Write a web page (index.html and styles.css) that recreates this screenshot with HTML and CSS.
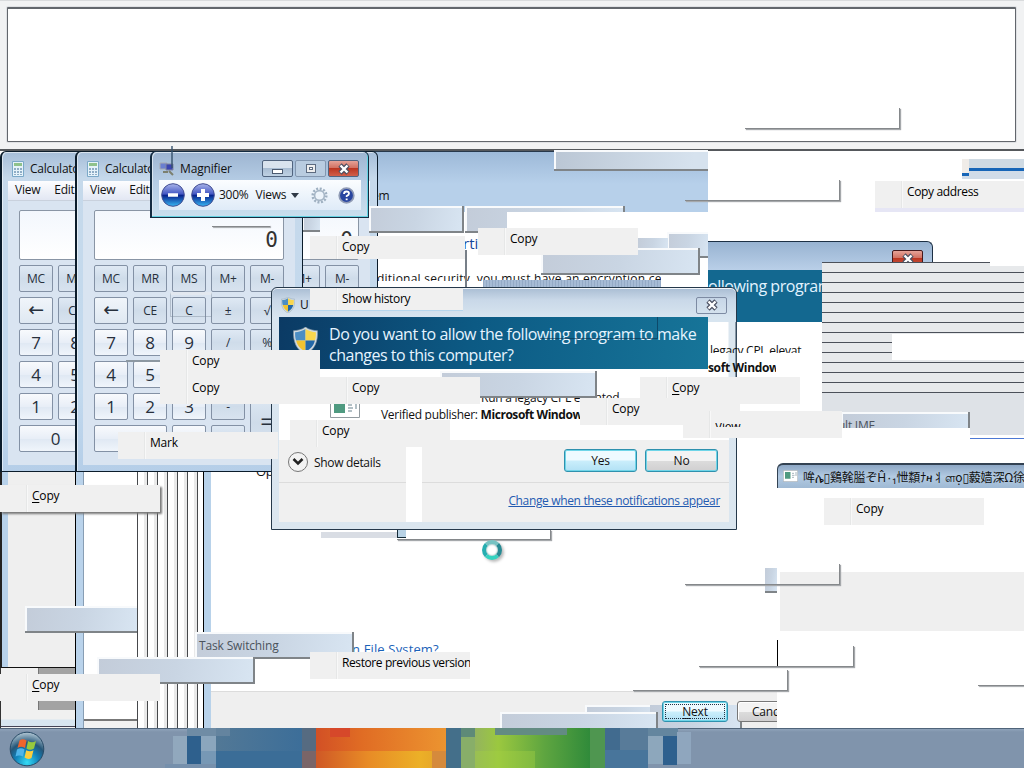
FILE: index.html
```html
<!DOCTYPE html>
<html lang="en">
<head>
<meta charset="utf-8">
<title>Desktop</title>
<link rel="stylesheet" href="styles.css">
</head>
<body>
<svg width="0" height="0" class="defs">
  <defs>
    <linearGradient id="ball" x1="0" y1="0" x2="0" y2="1"><stop offset="0" stop-color="#a9b5ea"/><stop offset=".45" stop-color="#4558c4"/><stop offset=".52" stop-color="#08248f"/><stop offset="1" stop-color="#38b8f4"/></linearGradient>
    <symbol id="shield" viewBox="0 0 24 26" preserveAspectRatio="none">
      <path d="M12 0C9 2.500 4 3.500 0.500 3.500C0 14 3 22 12 26C21 22 24 14 23.500 3.500C20 3.500 15 2.500 12 0Z" fill="#d2dbe1" stroke="#8296a5" stroke-width=".6"/>
      <path d="M12 2C9 4 5 5 2 5C2 8 2 10 3 13H12Z" fill="#4c8ec4"/><path d="M12 2C15 4 19 5 22 5C22 8 22 10 21 13H12Z" fill="#f8d64e"/>
      <path d="M3 13H12V24C7 21 4 18 3 13Z" fill="#f1c331"/><path d="M21 13H12V24C17 21 20 18 21 13Z" fill="#2368a8"/>
    </symbol>
    <symbol id="cross" viewBox="0 0 14 12"><path d="M3 2L11 10M11 2L3 10" stroke="#4b5062" stroke-width="4.600"/><path d="M3.500 2.500L10.500 9.500M10.500 2.500L3.500 9.500" stroke="#fff" stroke-width="2.400"/></symbol>
    <symbol id="prog" viewBox="0 0 30 18" preserveAspectRatio="none"><path d="M.5.5H29.500V17.500H.5Z" fill="#fff" stroke="#929ba0"/><path d="M4 3H15V13H4Z" fill="#4f9a80"/><path d="M18 5H22M18 8H23M18 11H22M26 3V9" stroke="#9aacb4" stroke-width="1.500"/></symbol>
    <symbol id="calcicon" viewBox="0 0 12 16"><path d="M.5.5H11.500V15.500H.5Z" fill="#e6f3fa" stroke="#7ba9c8"/><path d="M2 2H10V5H2Z" fill="#8fc28c"/><path d="M2 7H4V9H2ZM5 7H7V9H5ZM8 7H10V9H8ZM2 10H4V12H2ZM5 10H7V12H5ZM8 10H10V12H8ZM2 13H4V14H2ZM5 13H7V14H5ZM8 13H10V14H8Z" fill="#8fadc6"/></symbol>
  </defs>
</svg>
<main class="desktop">
  <section class="obj pane"><div class="pane-box"></div></section>
  <i class="obj drop d1"></i>

  <section class="obj sys">
    <p class="obj t sys-em">em</p>
    <div class="obj sys-clip"><span class="t">ditional security, you must have an encryption ce</span></div>
  </section>

  <section class="obj left-win"></section>
  <section class="obj left-low"><i></i></section>
  <section class="obj mid-win"></section>
  <div class="obj vlines"></div>
  <section class="obj wizard"><p class="t">Op</p><div class="foot"></div></section>
  <div class="obj wiz-link"><span class="t">n File System?</span></div>

  <section class="obj calc c3" data-calc></section>
  <i class="obj tip t-calc"></i>
  <section class="obj calc c1" data-calc></section>
  <section class="obj calc c2" data-calc></section>
  <i class="obj bevel bv1"></i><i class="obj bevel bv2"></i>

  <i class="obj tip t1"></i><i class="obj tip t2"></i><i class="obj tip t3"></i><i class="obj white w1"></i>
  <i class="obj tip t4"></i><i class="obj tip t5"></i><i class="obj tip t6"></i><i class="obj tip t7"></i><i class="obj line-a"></i>
  <p class="obj t rti">rti</p>

  <section class="obj uac2">
    <header><span class="close red"><svg width="14" height="12"><use href="#cross"/></svg></span></header>
    <h2>ollowing progran</h2>
  </section>
  <div class="obj hlines"></div><i class="obj white w2"></i><i class="obj white w4"></i>
  <i class="obj grey-r"></i><i class="obj blue-r"></i>
  <div class="obj tip ime"><span class="t">ult IME</span></div>

  <section class="obj uac">
    <header><svg width="14" height="16"><use href="#shield"/></svg><span class="t">U</span><span class="close"><svg width="14" height="12"><use href="#cross"/></svg></span></header>
    <div class="banner"><svg width="25" height="27"><use href="#shield"/></svg><h1>Do you want to allow the following program to make<br>changes to this computer?</h1></div>
    <div class="info"><svg width="30" height="18"><use href="#prog"/></svg><div><p class="t cpl">Run a legacy CPL elevated</p><p class="t pub">Verified publisher: <b>Microsoft Window</b></p></div></div>
    <div class="actions"><span class="chev"><svg width="12" height="8" viewBox="0 0 12 8"><path d="M1.500 1L6 5.500L10.500 1" fill="none" stroke="#222" stroke-width="2.500"/></svg></span><span class="t det">Show details</span><button class="yes">Yes</button><button>No</button></div>
    <div class="more"><a class="t">Change when these notifications appear</a></div>
  </section>
  <i class="obj bevel bv3"></i>
  <i class="obj white w3"></i><i class="obj w6"></i>
  <div class="obj leg"><span class="t">legacy CPL elevat</span></div>
  <div class="obj leg2 t"><b>soft Window</b></div>
  <i class="obj tip t8"></i>

  <div class="obj item m1"><span>Copy</span></div>
  <div class="obj item m2"><span>Copy</span></div>
  <div class="obj item m3"><span>Show history</span></div>
  <div class="obj item m4"><span>Copy</span></div>
  <div class="obj item m5"><span>Copy</span></div>
  <div class="obj item m6"><span>Copy</span></div>
  <div class="obj item m7"><span><u>C</u>opy</span></div>
  <div class="obj item m8"><span>Copy</span></div>
  <div class="obj item m9"><span>View</span></div>
  <div class="obj item m10"><span>Copy</span></div>
  <div class="obj item m11"><span>Mark</span></div>
  <div class="obj item m12"><span><u>C</u>opy</span></div>
  <i class="obj tip t9"></i>
  <div class="obj tip t10"><span class="t">Task Switching</span></div>
  <i class="obj tip t11"></i>
  <div class="obj item m13"><span><u>C</u>opy</span></div>
  <div class="obj item m14"><span>Restore previous version</span></div>

  <i class="obj ghost"></i><i class="obj edge"></i>
  <div class="obj item m15"><span>Copy address</span></div>
  <section class="obj cjk"><svg width="15" height="12"><use href="#prog"/></svg><span>哞ሌ▯鷄㲦膉ぞĤ۰₁怈纇ﾅዛ丬ளọ▯藙嫱深Ω徐</span></section>
  <div class="obj item m16"><span>Copy</span></div>
  <i class="obj tip t12"></i><i class="obj grey-b"></i><i class="obj caret"></i>

  <i class="obj tip t13"></i><i class="obj tip t14"></i><i class="obj tip t15"></i>
  <button class="obj next"><u>N</u>ext</button>
  <div class="obj cancel-clip"><button class="cancel">Cancel</button></div>
  <i class="obj drop d2"></i><i class="obj drop d3"></i><i class="obj drop d4"></i><i class="obj drop d5"></i><i class="obj drop d6"></i><i class="obj drop d7"></i>
  <i class="obj below"></i><i class="obj drop d8"></i><i class="obj chip"></i>
  <i class="obj ring"></i>

  <section class="obj mag">
    <header><svg width="16" height="16" viewBox="0 0 16 16"><path d="M1 2H8V8H1Z" fill="#6b7fd0" stroke="#a7a9b0"/><path d="M7 3H14V9H7Z" fill="#3b45b0" stroke="#8286a0"/><path d="M4 11H9M10 10L14 14" stroke="#7c806f" stroke-width="2"/></svg><span class="t">Magnifier</span>
      <span class="cap"><i class="mn"></i></span><span class="cap pale"><i class="mx"></i></span><span class="cap red"><svg width="14" height="12"><use href="#cross"/></svg></span></header>
    <div class="tools">
      <svg width="24" height="24" viewBox="0 0 24 24"><circle cx="12" cy="12" r="11.300" fill="url(#ball)" stroke="#444f92"/><path d="M7 12H17" stroke="#fff" stroke-width="3.500"/></svg>
      <svg class="plus" width="24" height="24" viewBox="0 0 24 24"><circle cx="12" cy="12" r="11.300" fill="url(#ball)" stroke="#444f92"/><path d="M6 12H18M12 6V18" stroke="#fff" stroke-width="4"/></svg>
      <span class="t pct">300%</span><span class="t views">Views</span><i class="arrow"></i>
      <svg class="gear" width="17" height="17" viewBox="0 0 17 17"><circle cx="8.500" cy="8.500" r="6.800" fill="none" stroke="#9fb0c1" stroke-width="2.500" stroke-dasharray="2 1.560"/><circle cx="8.500" cy="8.500" r="4.900" fill="#edf4fb" stroke="#a6b6c6" stroke-width="1.600"/></svg>
      <svg width="17" height="17" viewBox="0 0 17 17"><circle cx="8.500" cy="8.500" r="7.300" fill="#2845a0" stroke="#909bb5" stroke-width="1.700"/><path d="M6 7Q6 4.500 8.500 4.500Q11 4.500 11 6.500Q11 8 8.700 9V10" fill="none" stroke="#fff" stroke-width="1.800"/><path d="M7.700 11.500H9.600V13.200H7.700Z" fill="#fff"/></svg>
    </div>
  </section>
  <i class="obj vmark"></i>

  <footer class="obj taskbar">
    <svg class="mosaic" width="540" height="40" shape-rendering="crispEdges">
      <defs>
        <linearGradient id="b1"><stop offset="0" stop-color="#527896"/><stop offset="1" stop-color="#3c6e99"/></linearGradient>
        <linearGradient id="o1"><stop offset="0" stop-color="#d25025"/><stop offset=".35" stop-color="#e06c24"/><stop offset="1" stop-color="#ec9430"/></linearGradient>
        <linearGradient id="o2"><stop offset="0" stop-color="#cf5826"/><stop offset=".4" stop-color="#e88b26"/><stop offset=".8" stop-color="#ecb027"/><stop offset="1" stop-color="#e2a02a"/></linearGradient>
        <linearGradient id="g1"><stop offset="0" stop-color="#94b45e"/><stop offset=".2" stop-color="#9bc83f"/><stop offset=".6" stop-color="#5ea540"/><stop offset="1" stop-color="#2f8a3a"/></linearGradient>
      </defs>
      <rect x="8" y="8" width="15" height="28" fill="#91a8bd"/><rect x="22" y="0" width="30" height="8" fill="#6f8ca5"/><rect x="22" y="8" width="14" height="29" fill="#2e608d"/><rect x="36" y="8" width="15" height="15" fill="#8ba6bd"/><rect x="36" y="23" width="15" height="13" fill="#7798b5"/><rect x="0" y="36" width="51" height="4" fill="#7690ac"/>
      <rect x="51" y="0" width="87" height="23" fill="url(#b1)"/><rect x="51" y="23" width="87" height="17" fill="#3b6d97"/><rect x="51" y="0" width="14" height="8" fill="#64849f"/>
      <rect x="137" y="0" width="15" height="40" fill="#566b81"/><rect x="137" y="23" width="15" height="17" fill="#7a6568"/>
      <rect x="151" y="0" width="130" height="23" fill="url(#o1)"/><rect x="151" y="23" width="130" height="17" fill="url(#o2)"/><rect x="267" y="23" width="14" height="17" fill="#d58a3c"/><rect x="165" y="0" width="20" height="9" fill="#d6482a"/>
      <rect x="281" y="0" width="15" height="40" fill="#446f8a"/><rect x="296" y="0" width="14" height="40" fill="#88ae69"/><rect x="296" y="0" width="14" height="9" fill="#5e8a78"/>
      <rect x="310" y="0" width="116" height="40" fill="url(#g1)"/><rect x="330" y="0" width="72" height="7" fill="#638b83"/><rect x="310" y="23" width="60" height="17" fill="#a3d044" opacity=".4"/><rect x="425" y="0" width="15" height="40" fill="#4f9650"/>
      <rect x="440" y="0" width="43" height="40" fill="#587b99"/><rect x="440" y="0" width="15" height="40" fill="#416b8f"/><rect x="440" y="22" width="43" height="18" fill="#48759b"/>
      <rect x="483" y="8" width="15" height="28" fill="#8da7bc"/><rect x="483" y="0" width="30" height="8" fill="#64869f"/><rect x="498" y="8" width="14" height="29" fill="#2e608e"/><rect x="512" y="4" width="14" height="32" fill="#8fa6be"/>
    </svg>
    <svg class="orb" width="36" height="36" viewBox="0 0 36 36">
      <defs><radialGradient id="orb" cx=".5" cy=".9" r=".9"><stop offset="0" stop-color="#35dcf5"/><stop offset=".4" stop-color="#1180b8"/><stop offset=".65" stop-color="#255678"/><stop offset="1" stop-color="#b4c9d6"/></radialGradient></defs>
      <circle cx="18" cy="18" r="16.800" fill="url(#orb)" stroke="#274a66"/>
      <path d="M10.500 9.500Q13.500 7 17.500 9.500L16 17Q12 14.500 8.500 17Z" fill="#f0642c"/><path d="M19 10Q23 12.500 27 10L25 17.500Q21 20 17.500 17.500Z" fill="#97c93e"/>
      <path d="M8 18.500Q12 16 15.500 18.500L14 25.500Q10 23.500 6.500 25.500Z" fill="#4fb5ea"/><path d="M17.200 19.200Q21 21.500 24.500 19.200L22.500 27Q19 29 15.500 26.500Z" fill="#fbce3e"/>
    </svg>
  </footer>
</main>
<script src="calc.js"></script>
</body>
</html>
```
FILE: styles.css
```css
* { box-sizing: border-box; }
body { margin: 0; font: 12px/16px "Open Sans", "Noto Sans", "Noto Sans CJK JP", sans-serif; color: #111; overflow: hidden; }
p, h1, h2 { margin: 0; font-weight: 400; }
.defs { position: absolute; }
.desktop { position: relative; width: 1024px; height: 768px; background: #fff; overflow: hidden; }
.obj { position: absolute; display: block; }
.t { white-space: nowrap; letter-spacing: -.25px; }
svg { flex: none; display: block; }

.pane { left: 0; top: 0; width: 1024px; height: 151px; padding: 6px 8px 8px 7px; background: #f1f2f3; border-bottom: 2px solid #55585c; border-top: 1px solid #d9dbdd; }
.pane-box { height: 135px; background: #fff; border: 1px solid #62666c; border-top-width: 2px; border-radius: 1px; box-shadow: 0 0 0 1px #dfe1e4; }
.white { background: #fff; }

.sys { left: 368px; top: 151px; width: 340px; height: 137px; overflow: hidden; border-top: 1px solid #27384b; background: linear-gradient(#9db9d8, #b7d0ea 32px 60px, #fff 60px); }
.sys-em { left: 4px; top: 36px; }
.sys-clip { left: 9px; top: 122px; width: 284px; height: 7px; overflow: hidden; }
.sys-clip .t { display: block; margin-top: -3px; letter-spacing: .24px; }
.rti { left: 463px; top: 235px; font-size: 15px; letter-spacing: 0; color: #16479a; }

.left-win { left: 0; top: 472px; width: 76px; height: 196px; background: #efefef; border-left: 2px solid #222; border-right: 1px solid #000; border-bottom: 1px solid #111; box-shadow: inset 6px 0 #b7d1ea; }
.left-low { left: 0; top: 668px; width: 76px; height: 60px; padding: 0 0 0 37px; background: linear-gradient(#f0f0f0 51px, #d8e6f0 52px 58px, #445 58px 59px, #f3f3f3 59px); border-left: 1px solid #333; border-right: 1px solid #000; }
.left-low i { display: block; height: 42px; background: #a3a3a3; border-left: 1px solid #777; }
.mid-win { left: 76px; top: 472px; width: 61px; height: 256px; background: linear-gradient(#fff 247px, #777 247px 249px, #f1f1f1 249px); }
.mid-win::before { content: ""; display: block; width: 7px; height: 256px; background: #bad3eb; border-right: 1px solid #889eb4; }
.vlines { left: 137px; top: 472px; width: 67px; height: 256px; background: repeating-linear-gradient(90deg, #46484b 0 1px, #fff 1px 7px, #e9e9e9 7px 10px); border-right: 1px solid #000; }
.wizard { left: 204px; top: 472px; width: 573px; height: 256px; padding-left: 7px; background: linear-gradient(90deg, #b8d2ea 7px, #fff 7px); overflow: hidden; display: flex; flex-direction: column; justify-content: space-between; }
.wizard p { padding-left: 45px; margin-top: -9px; font-size: 13px; }
.foot { height: 37px; background: #efefef; border-top: 1px solid #dcdcdc; }
.wiz-link { left: 354px; top: 642px; width: 90px; height: 11px; overflow: hidden; color: #1b62b8; font-size: 13px; }
.wiz-link .t { display: block; margin-top: -1px; margin-left: -2px; letter-spacing: .15px; }

.calc { top: 151px; width: 228px; height: 321px; padding: 0 18px 0 17px; border: 1px solid #0b1c2b; border-left-width: 2px; background: linear-gradient(#a5bdd8, #c6d9eb 26px, #c2d9ee 240px, #b5cee8); border-radius: 6px 6px 0 0; box-shadow: inset 1px 1px rgba(255,255,255,.55); overflow: hidden; }
.c1 { left: 0; } .c2 { left: 75px; } .c3 { left: 150px; }
.calc header { display: flex; align-items: center; gap: 6px; height: 32px; margin-left: -7px; padding-top: 2px; }
.calc nav { display: flex; gap: 14px; height: 20px; margin: -3px -11px 0; padding: 1px 7px; background: linear-gradient(#fdfdff, #e2e7f3); border-bottom: 1px solid #c9d1dd; }
.calc .body { margin: 0 -11px; padding: 9px 11px 12px; background: #d9e4f1; height: 264px; }
.display { width: 190px; height: 50px; margin-bottom: 5px; border: 1px solid #8995a5; border-radius: 2px; background: linear-gradient(#f3f7fd, #fff); text-align: right; padding: 17px 5px 0; font: 21px/24px "DejaVu Sans Mono", monospace; color: #333; }
.keys { display: grid; grid-template-columns: repeat(5, 34px); grid-auto-rows: 27px; gap: 5px; }
.keys span { border: 1px solid #8391a5; border-radius: 2px; background: linear-gradient(#f8fafd, #e8eef7 50%, #dfe8f3 51%, #f0f5fb); text-align: center; line-height: 25px; color: #27303c; font-size: 12px; letter-spacing: -.3px; }
.keys .op { background: linear-gradient(#dfe9f4, #cfdcea 50%, #d8e3ef); }
.keys .num { font-size: 17px; }
.keys .bk { font: 19px/22px "DejaVu Sans", sans-serif; background: linear-gradient(#f0f5fa, #dfe8f2); }
.keys .eq { grid-row: span 2; font-size: 24px; line-height: 54px; }
.keys .zero { grid-column: span 2; }

.bevel { border: 0 solid #8e98a3; }
.bv1 { left: 170px; top: 292px; width: 42px; height: 25px; border: 1px solid rgba(120,135,150,.4); border-top: 3px solid rgba(230,235,240,.7); }
.bv2 { left: 126px; top: 360px; width: 40px; height: 2px; background: #8d98a2; }
.bv3 { left: 540px; top: 317px; width: 118px; height: 22px; border: solid rgba(8,48,78,.6); border-width: 0 1px 1px 0; }

.tip { background: linear-gradient(100deg, #c3ccd9, #c9d5e3 50%, #d8e5f2); border: solid #7f8488; border-width: 0 2px 2px 0; box-shadow: inset 2px 2px #f8fafc; color: #4b535d; overflow: hidden; }
.t-calc { left: 302px; top: 211px; width: 18px; height: 21px; border-right: 0; }
.t1 { left: 554px; top: 150px; width: 154px; height: 21px; border-right: 0; background: linear-gradient(100deg, #bac6d4, #d6e2ee 90%); }
.t2 { left: 369px; top: 206px; width: 95px; height: 27px; }
.t3 { left: 465px; top: 206px; width: 160px; height: 27px; }
.w1 { left: 507px; top: 212px; width: 201px; height: 36px; }
.t4 { left: 667px; top: 232px; width: 41px; height: 26px; border-right: 0; }
.t5 { left: 638px; top: 238px; width: 30px; height: 12px; border: 0; box-shadow: none; }
.t6 { left: 541px; top: 248px; width: 159px; height: 27px; }
.t7 { left: 483px; top: 280px; width: 178px; height: 8px; background: repeating-linear-gradient(90deg, #94aac6 0 1px, #a6bbd5 1px 3px); border: 0; box-shadow: none; }
.line-a { left: 465px; top: 250px; width: 2px; height: 38px; background: #777f88; }

.uac2 { left: 708px; top: 241px; width: 225px; height: 81px; background: linear-gradient(90deg, #136890 114px, #fff 114px); }
.uac2 header { height: 29px; display: flex; justify-content: flex-end; padding: 8px 9px 0; border: solid #1d3044; border-width: 1px 1px 0 0; border-radius: 0 6px 0 0; background: linear-gradient(#98b3d1, #b9cfe8); }
.uac2 h2 { padding: 6px 0 0; font-size: 16px; line-height: 20px; color: #e2f3ff; letter-spacing: -.45px; width: 114px; white-space: nowrap; overflow: hidden; }
.close { width: 31px; height: 17px; display: flex; align-items: center; justify-content: center; border: 1px solid #7d8ba3; border-radius: 2px; }
.red { background: linear-gradient(#e5a297, #d27263 45%, #bb3621 50%, #c85b45); border-color: #45191c; }
.hlines { left: 822px; top: 262px; width: 202px; height: 150px; background: repeating-linear-gradient(#4b5059 0 1px, #e7e9eb 1px 10px) 0 0 / 100% 131px no-repeat, #dee2e7; }
.w2 { left: 892px; top: 334px; width: 132px; height: 26px; }
.w4 { left: 990px; top: 262px; width: 34px; height: 4px; }
.grey-r { left: 822px; top: 411px; width: 202px; height: 24px; background: #dee2e7; }
.blue-r { left: 841px; top: 428px; width: 183px; height: 11px; background: linear-gradient(#dee2e7 7px, #fff 7px 10px, #4c78d4 10px) 129px 0 / 54px 11px no-repeat, #fff; }
.ime { left: 841px; top: 412px; width: 129px; height: 16px; border-bottom: 0; padding-top: 6px; }
.ime .t { margin-left: -3px; }

.uac { left: 271px; top: 287px; width: 466px; height: 243px; padding: 0 7px; border: 1px solid #25384a; border-radius: 6px 6px 0 0; background: linear-gradient(#a9bdd3, #c9d8e8 12px, #d8e5f0 30px, #dbe6ef); box-shadow: inset 0 1px #f2f6fa; display: flex; flex-direction: column; }
.uac header { display: flex; gap: 5px; height: 29px; align-items: center; padding: 5px 2px 0; }
.uac header .close { margin-left: auto; }
.banner { width: 429px; height: 52px; padding: 7px 0 0 14px; display: flex; gap: 11px; align-items: flex-start; background: linear-gradient(100deg, #0b3a64, #0c5a84 45%, #177599); color: #e6f4ff; }
.banner svg { margin-top: 3px; }
.banner h1 { font-size: 16px; line-height: 21px; letter-spacing: -.47px; white-space: nowrap; }
.info { height: 71px; padding: 21px 0 0 51px; background: #fff; display: flex; gap: 21px; overflow: hidden; }
.info svg { margin-top: 10px; }
.cpl { padding-left: 100px; height: 17px; }
.info b { letter-spacing: -.45px; }
.pub { letter-spacing: -.28px; }
.actions { height: 42px; padding: 9px 10px 0 9px; display: flex; gap: 8px; background: #f0f0f0; }
.chev { width: 20px; height: 20px; margin-top: 3px; border: 1px solid #777; border-radius: 50%; display: flex; align-items: center; justify-content: center; background: #f3f3f3; flex: none; }
.det { margin: 6px auto 0 -2px; letter-spacing: -.32px; }
.actions button { transform: translateX(-1px); }
button { width: 73px; height: 23px; padding: 0; border: 1px solid #2f91ae; border-radius: 3px; font: inherit; line-height: 20px; color: #111; background: linear-gradient(#f3f3f3 50%, #dcdcdc 52%, #d0cfd0); box-shadow: inset 0 0 0 1px #6fd5e8; letter-spacing: -.2px; }
.yes, .next { background: linear-gradient(#eefaff 48%, #caeefb 52%, #b2e1f5); }
.more { height: 40px; padding: 10px 9px 0 0; text-align: right; background: #f0f0f0; border-top: 1px solid #dcdcdc; }
.more a { color: #235ab0; text-decoration: underline; letter-spacing: -.35px; }
.w3 { left: 406px; top: 447px; width: 16px; height: 75px; }
.w6 { left: 708px; top: 322px; width: 114px; height: 89px; background: linear-gradient(90deg, #fff 20px, #dbe6ef 21px 27px, #34485b 28px 29px, #fff 29px); }
.leg { left: 710px; top: 343px; width: 92px; height: 10px; overflow: hidden; }
.leg .t { display: block; }
.leg2 { left: 708px; top: 360px; width: 68px; height: 15px; overflow: hidden; letter-spacing: -.35px; }
.t8 { left: 440px; top: 371px; width: 157px; height: 27px; }

.item { width: 160px; height: 27px; padding: 3px 0 0 32px; background: linear-gradient(90deg, transparent 26px, #e6e7e7 26px 27px, #f8f8f8 27px 28px, transparent 28px) #f0f0f0; overflow: hidden; white-space: nowrap; letter-spacing: -.2px; color: #000; }
u { text-underline-offset: 2px; }
.m1 { left: 310px; top: 236px; width: 155px; height: 23px; }
.m2 { left: 478px; top: 228px; }
.m3 { left: 310px; top: 288px; width: 153px; height: 23px; border-bottom: 1px solid #b5d5ec; letter-spacing: -.32px; }
.m4 { left: 160px; top: 350px; } .m5 { left: 160px; top: 377px; } .m6 { left: 320px; top: 377px; }
.m7 { left: 640px; top: 377px; } .m8 { left: 580px; top: 398px; width: 160px; }
.m9 { left: 683px; top: 411px; width: 159px; }
.m9 span { display: block; height: 4px; margin-top: 9px; overflow: hidden; line-height: 8px; }
.m10 { left: 290px; top: 420px; } .m11 { left: 118px; top: 432px; }
.m12 { left: 0; top: 485px; box-shadow: 2px 2px 2px #777; } .m13 { left: 0; top: 674px; }
.m14 { left: 310px; top: 652px; letter-spacing: -.4px; } .m15 { left: 875px; top: 181px; height: 31px; border-bottom: 4px solid #e6e6f5; letter-spacing: -.35px; }
.m16 { left: 824px; top: 498px; }
.t9 { left: 25px; top: 606px; width: 112px; height: 27px; border-right: 0; }
.t10 { left: 195px; top: 632px; width: 159px; height: 27px; padding: 6px 0 0 4px; }
.t10 .t { letter-spacing: -.15px; }
.t11 { left: 97px; top: 657px; width: 158px; height: 27px; }

.ghost { left: 962px; top: 159px; width: 62px; height: 22px; background: linear-gradient(#cfdae3 9px, #1765b7 9px 12px, #d1dce8 12px 20px, #fff 20px); }
.edge { left: 962px; top: 159px; width: 7px; height: 17px; border: solid #1765b7; border-width: 0 0 3px; background: #f0ece8; }
.cjk { left: 777px; top: 463px; width: 247px; height: 25px; padding: 5px 0 0 5px; display: flex; gap: 5px; border: solid #334252; border-width: 2px 0 0 1px; border-radius: 6px 0 0 0; background: linear-gradient(#8da7c5, #b2cae2 50%, #9fb9d4); overflow: hidden; white-space: nowrap; font: 12px/14px "Noto Sans CJK JP", "Noto Sans", "DejaVu Sans", sans-serif; letter-spacing: -.2px; }
.t12 { left: 765px; top: 568px; width: 12px; height: 25px; border-right: 0; box-shadow: none; }
.grey-b { left: 780px; top: 572px; width: 244px; height: 59px; background: #efefef; }
.caret { left: 777px; top: 640px; width: 1px; height: 27px; background: #000; }
.t13 { left: 585px; top: 705px; width: 77px; height: 23px; border: 0; }
.t14 { left: 650px; top: 705px; width: 92px; height: 23px; border-bottom: 0; box-shadow: none; }
.t15 { left: 500px; top: 712px; width: 158px; height: 16px; border-bottom: 0; }
.next { left: 662px; top: 701px; width: 66px; height: 21px; line-height: 17px; }
.next::after { content: ""; position: absolute; inset: 2px; border: 1px dotted #234; }
.cancel-clip { left: 737px; top: 701px; width: 40px; height: 21px; overflow: hidden; }
.cancel { height: 21px; border-color: #777; box-shadow: inset 1px 1px #fff; text-align: left; padding-left: 14px; line-height: 17px; }

.drop { width: 155px; height: 21px; border: solid #85888b; border-width: 0 1px 1px 0; box-shadow: 1px 1px 1px #a5a8ab; }
.d1 { left: 745px; top: 108px; } .d2 { left: 685px; top: 180px; } .d3 { left: 685px; top: 564px; } .d4 { left: 699px; top: 646px; } .d5 { left: 633px; top: 670px; }
.d6 { left: 978px; top: 684px; width: 50px; height: 2px; } .d7 { left: 212px; top: 225px; width: 58px; height: 2px; border-right: 0; }
.below { left: 321px; top: 532px; width: 76px; height: 6px; background: #d9dde4; }
.d8 { left: 397px; top: 530px; width: 154px; height: 10px; }
.chip { left: 397px; top: 530px; width: 9px; height: 8px; background: #b8d2e5; border: solid #152b38; border-width: 0 0 1px 1px; }
.ring { left: 482px; top: 540px; width: 20px; height: 20px; border-radius: 50%; border: 4px solid #27aeb0; border-top-color: #77c3c3; border-right-color: #278b94; border-bottom-color: #34d3c0; background: #fff; box-shadow: 2px 2px 3px #bbb, inset 0 0 2px #488; }

.mag { left: 150px; top: 151px; width: 219px; height: 67px; padding: 0 7px; border: 2px solid #142b40; border-width: 1px 1px 1px 2px; border-radius: 6px 6px 0 0; background: linear-gradient(#9db5d1, #b6cde5 30px, #c9dfed); box-shadow: inset -1px -1px #63d2e2, inset 1px 1px #d9e5f0; }
.mag header { height: 28px; padding: 5px 3px 0 0; display: flex; align-items: center; gap: 5px; }
.mag header .t { margin-right: auto; letter-spacing: -.15px; }
.cap { width: 31px; height: 17px; border: 1px solid #51647f; border-radius: 2px; background: linear-gradient(#d9e3ee 45%, #a9bdd3 50%, #bfd1e3); display: flex; align-items: center; justify-content: center; margin-right: -3px; }
.cap.red { background: linear-gradient(#e5a297, #d27263 45%, #bb3621 50%, #d1604b); margin-right: -1px; }
.pale { background: #b9cce0; border-color: #8397b0; }
.mn { width: 11px; height: 5px; background: #fff; border: 1px solid #4b5a70; margin-top: 6px; }
.mx { width: 10px; height: 9px; background: #fff; border: 1px solid #5d6b80; box-shadow: inset 0 0 0 2px #eee, inset 0 0 0 3px #5d6b80; }
.tools { display: flex; align-items: center; height: 30px; padding-left: 2px; background: linear-gradient(#fbfdff, #dfebf8); }
.plus { margin-left: 6px; }
.pct { margin-left: 4px; } .views { margin-left: 7px; }
.arrow { margin-left: 5px; border: 4px solid transparent; border-top: 5px solid #303a46; border-bottom: 0; }
.gear { margin: 0 10px 0 12px; }
.vmark { left: 171px; top: 146px; width: 2px; height: 22px; background: #34516b; opacity: .7; }

.taskbar { left: 0; top: 728px; width: 1024px; height: 40px; display: flex; align-items: flex-start; flex-direction: row-reverse; justify-content: flex-end; border-top: 1px solid #50647a; background: linear-gradient(#8fa3ba, #8094ac 3px); }
.orb { margin: 2px 120px 0 9px; }
.mosaic { margin-top: -1px; }
```
FILE: calc.js
```js
const keys = [
  ['MC','op'],['MR','op'],['MS','op'],['M+','op'],['M-','op'],
  ['←','op bk'],['CE','op'],['C','op'],['±','op'],['√','op'],
  ['7','num'],['8','num'],['9','num'],['/','op'],['%','op'],
  ['4','num'],['5','num'],['6','num'],['*','op'],['1/x','op'],
  ['1','num'],['2','num'],['3','num'],['-','op'],['=','op eq'],
  ['0','num zero'],['.','num'],['+','op']
];
document.querySelectorAll('[data-calc]').forEach(w => {
  w.innerHTML = '<header><svg width="12" height="16"><use href="#calcicon"/></svg><span class="t">Calculator</span></header>' +
    '<nav><span class="t">View</span><span class="t">Edit</span></nav>' +
    '<div class="body"><div class="display">0</div><div class="keys">' +
    keys.map(k => `<span class="${k[1]}">${k[0]}</span>`).join('') + '</div></div>';
});
```
